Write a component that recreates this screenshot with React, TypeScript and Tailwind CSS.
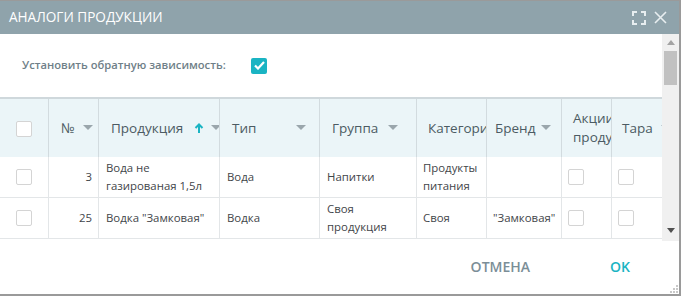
import React from "react";

const font = { fontFamily: '"Open Sans", "Noto Sans", sans-serif' };

function Caret({ className = "" }: { className?: string }) {
  return (
    <svg width="10" height="6" viewBox="0 0 10 6" className={className}>
      <path d="M0 0 L10 0 L5 5 Z" fill="#9aa6ac" />
    </svg>
  );
}

function Box() {
  return <div className="w-[16px] h-[16px] rounded-[2px] border border-[#d4d4d4] bg-white" />;
}

const rows = [
  { n: "3", p: ["Вода не", "газированая 1,5л"], t: "Вода", g: ["Напитки"], c: ["Продукты", "питания"], b: "" },
  { n: "25", p: ["Водка \"Замковая\""], t: "Водка", g: ["Своя", "продукция"], c: ["Своя"], b: "\"Замковая\"" },
];

export default function App() {
  return (
    <div style={font} className="w-[681px] h-[296px] bg-white border-t border-r-2 border-b-2 border-[#9a9a9a] flex flex-col overflow-hidden">
      <div className="h-[33px] shrink-0 bg-[#8fa3ab] flex items-center justify-between pl-[9px] pr-[12px]">
        <span className="text-white text-[13.6px]">АНАЛОГИ ПРОДУКЦИИ</span>
        <div className="flex items-center gap-[8px]">
          <svg width="14" height="14" viewBox="0 0 14 14" fill="none" stroke="#e8eef0" strokeWidth="2">
            <path d="M1 5 V1 H5 M9 1 H13 V5 M13 9 V13 H9 M5 13 H1 V9" />
          </svg>
          <svg width="13" height="13" viewBox="0 0 13 13" fill="none" stroke="#e8eef0" strokeWidth="1.6">
            <path d="M1 1 L12 12 M12 1 L1 12" />
          </svg>
        </div>
      </div>

      <div className="flex h-[207px] shrink-0">
        <div className="w-[662px] overflow-hidden flex flex-col">
          <div className="h-[63px] shrink-0 flex items-center pl-[22px]">
            <span className="text-[11.2px] font-semibold text-[#6f7f88] w-[229px]">Установить обратную зависимость:</span>
            <div className="w-[16px] h-[16px] rounded-[2px] bg-[#1ab4c3] flex items-center justify-center">
              <svg width="11" height="9" viewBox="0 0 11 9" fill="none" stroke="white" strokeWidth="2.2">
                <path d="M1 4.5 L4 7.5 L10 1" />
              </svg>
            </div>
          </div>

          <div className="border-t-2 border-[#cfd8dc] flex h-[60px] shrink-0 bg-[#ebf5f8] text-[13.5px] text-[#4c5b63]">
            <div className="w-[49px] shrink-0 border-r border-[#d2dbdf] flex items-center justify-center pt-[2px]"><Box /></div>
            <div className="w-[50px] shrink-0 border-r border-[#d2dbdf] flex items-center pl-[12px] gap-[8px]">
              <span>№</span><Caret />
            </div>
            <div className="w-[121px] shrink-0 border-r border-[#d2dbdf] flex items-center pl-[12px] overflow-hidden whitespace-nowrap">
              <span>Продукция</span>
              <svg width="10" height="11" viewBox="0 0 10 11" className="ml-[11px] shrink-0" fill="none" stroke="#1ab4c3" strokeWidth="2">
                <path d="M5 10 V2 M1.5 5 L5 1.5 L8.5 5" />
              </svg>
              <Caret className="ml-[7px] shrink-0" />
            </div>
            <div className="w-[100px] shrink-0 border-r border-[#d2dbdf] flex items-center justify-between pl-[12px] pr-[13px]">
              <span>Тип</span><Caret />
            </div>
            <div className="w-[97px] shrink-0 border-r border-[#d2dbdf] flex items-center pl-[12px] gap-[10px]">
              <span>Группа</span><Caret />
            </div>
            <div className="w-[70px] shrink-0 border-r border-[#d2dbdf] flex items-center pl-[11px] overflow-hidden whitespace-nowrap">
              <span>Категории</span>
            </div>
            <div className="w-[75px] shrink-0 border-r border-[#d2dbdf] flex items-center pl-[8px] gap-[6px]">
              <span>Бренд</span><Caret />
            </div>
            <div className="w-[50px] shrink-0 border-r border-[#d2dbdf] flex items-center pl-[11px] overflow-hidden whitespace-nowrap leading-[19px]">
              <span>Акции<br />продукции</span>
            </div>
            <div className="w-[60px] shrink-0 flex items-center pl-[10px] gap-[8px] overflow-hidden whitespace-nowrap">
              <span>Тара</span><Caret className="shrink-0" />
            </div>
          </div>

          {rows.map((r) => (
            <div key={r.n} className="flex h-[41px] shrink-0 border-b border-[#e3e6e8] text-[11.4px] text-[#3f4549] leading-[18px]">
              <div className="w-[49px] shrink-0 border-r border-[#e3e6e8] flex items-center justify-center"><Box /></div>
              <div className="w-[50px] shrink-0 border-r border-[#e3e6e8] flex items-center justify-end pr-[6px]">{r.n}</div>
              <div className="w-[121px] shrink-0 border-r border-[#e3e6e8] flex flex-col justify-center pl-[7px] whitespace-nowrap">
                {r.p.map((s) => <span key={s}>{s}</span>)}
              </div>
              <div className="w-[100px] shrink-0 border-r border-[#e3e6e8] flex items-center pl-[7px]">{r.t}</div>
              <div className="w-[97px] shrink-0 border-r border-[#e3e6e8] flex flex-col justify-center pl-[7px]">
                {r.g.map((s) => <span key={s}>{s}</span>)}
              </div>
              <div className="w-[70px] shrink-0 border-r border-[#e3e6e8] flex flex-col justify-center pl-[6px]">
                {r.c.map((s) => <span key={s}>{s}</span>)}
              </div>
              <div className="w-[75px] shrink-0 border-r border-[#e3e6e8] flex items-center pl-[6px] whitespace-nowrap">{r.b}</div>
              <div className="w-[50px] shrink-0 border-r border-[#e3e6e8] flex items-center pl-[6px]"><Box /></div>
              <div className="w-[60px] shrink-0 flex items-center pl-[6px]"><Box /></div>
            </div>
          ))}
        </div>

        <div className="w-[17px] shrink-0 bg-[#f0f0f0] flex flex-col items-center justify-between pt-[6px] pb-[8px]">
          <div className="flex flex-col items-center w-full">
            <svg width="8" height="5" viewBox="0 0 8 5"><path d="M0 5 L4 0 L8 5 Z" fill="#a3a3a3" /></svg>
            <div className="mt-[6px] w-[13px] h-[34px] bg-[#c1c1c1]" />
          </div>
          <svg width="8" height="5" viewBox="0 0 8 5"><path d="M0 0 L8 0 L4 5 Z" fill="#505050" /></svg>
        </div>
      </div>

      <div className="flex-1 relative flex items-center justify-end pr-[49px] gap-[80px] text-[14px] font-semibold pb-[2px]">
        <span className="text-[#7b8e97]">ОТМЕНА</span>
        <span className="text-[#1ab4c3]">OK</span>
        <svg width="8" height="8" viewBox="0 0 8 8" className="absolute right-[1px] bottom-[1px]">
          <rect x="6" y="0" width="2" height="2" fill="#c8c8c8" />
          <rect x="3" y="3" width="2" height="2" fill="#c8c8c8" />
          <rect x="6" y="3" width="2" height="2" fill="#c8c8c8" />
          <rect x="0" y="6" width="2" height="2" fill="#c8c8c8" />
          <rect x="3" y="6" width="2" height="2" fill="#c8c8c8" />
          <rect x="6" y="6" width="2" height="2" fill="#c8c8c8" />
        </svg>
      </div>
    </div>
  );
}
